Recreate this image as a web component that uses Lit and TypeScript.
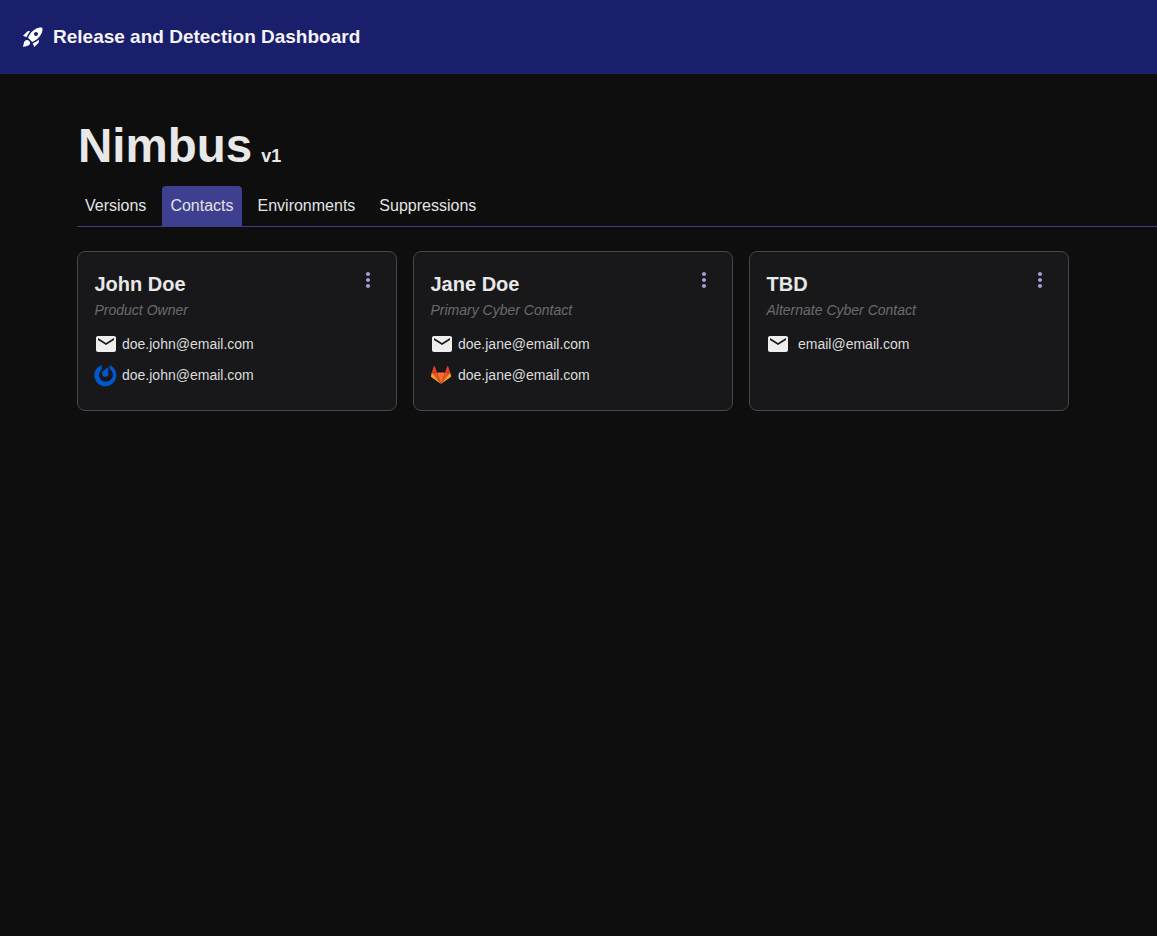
import { LitElement, html, css, svg } from 'lit';
import { customElement } from 'lit/decorators.js';

const mailIcon = html`<svg class="icon" viewBox="0 0 24 24"><path fill="#eeeeee" d="M20 4H4c-1.1 0-1.99.9-1.99 2L2 18c0 1.1.9 2 2 2h16c1.1 0 2-.9 2-2V6c0-1.1-.9-2-2-2zm0 4l-8 5-8-5V6l8 5 8-5v2z"/></svg>`;

const mattermostIcon = html`<svg class="icon" viewBox="0 0 24 24">
  <path fill="#0058cc" d="M7.6 1.9A11 11 0 1 0 15.6 2.100L15.700 5.900A7 7 0 1 1 7.700 6.200Z"/>
  <path fill="#0058cc" d="M14.200 4 14.400 12A3.400 3.400 0 1 1 9 8Z"/>
</svg>`;

const gitlabIcon = html`<svg class="icon" viewBox="0 0 24 24">
  ${svg`<path fill="#fc6d26" d="M11 21 7 9.500h8z"/>
  <path fill="#f0512b" d="M11 21 7 9.500H1.800z"/>
  <path fill="#fca326" d="M1.800 9.500 1 12.900c-.1.400 0 .800.300 1L11 21z"/>
  <path fill="#ea3f25" d="M1.800 9.500H7L4.700 3.200c-.1-.400-.600-.400-.800 0z"/>
  <path fill="#f0512b" d="M11 21l4-11.500h5.200z"/>
  <path fill="#fca326" d="M20.200 9.500l.800 3.400c.1.400 0 .800-.300 1L11 21z"/>
  <path fill="#ea3f25" d="M20.200 9.500H15l2.300-6.300c.1-.400.600-.400.800 0z"/>`}
</svg>`;

const contacts = [
  {
    name: 'John Doe',
    role: 'Product Owner',
    rows: [
      { icon: mailIcon, text: 'doe.john@email.com' },
      { icon: mattermostIcon, text: 'doe.john@email.com' },
    ],
  },
  {
    name: 'Jane Doe',
    role: 'Primary Cyber Contact',
    rows: [
      { icon: mailIcon, text: 'doe.jane@email.com' },
      { icon: gitlabIcon, text: 'doe.jane@email.com' },
    ],
  },
  {
    name: 'TBD',
    role: 'Alternate Cyber Contact',
    rows: [{ icon: mailIcon, text: 'email@email.com', wide: true }],
  },
];

const tabs = ['Versions', 'Contacts', 'Environments', 'Suppressions'];

@customElement('app-root')
export class AppRoot extends LitElement {
  static styles = css`
    :host {
      display: block;
      min-height: 936px;
      background-color: #0e0e0e;
      color: #e8e8e8;
      font-family: 'Liberation Sans', Arial, sans-serif;
    }

    .app-bar {
      display: flex;
      align-items: center;
      gap: 8px;
      height: 74px;
      padding-left: 21px;
      background-color: #1a1f6b;
      color: #f4f4f8;
      font-size: 19px;
      font-weight: 700;
    }

    .rocket {
      width: 24px;
      height: 24px;
      fill: #ffffff;
    }

    .content {
      padding-top: 44px;
      padding-left: 77px;
    }

    .title {
      display: flex;
      align-items: baseline;
      gap: 9px;
      margin: 0 0 13px 1px;
      height: 55px;
      line-height: 55px;
      font-size: 47.5px;
      font-weight: 700;
    }

    .title small {
      font-size: 18px;
    }

    .tabs {
      display: flex;
      gap: 8px;
      height: 40px;
      border-bottom: 1px solid #3f3f8f;
    }

    .tab {
      padding: 0 8px;
      line-height: 39px;
      border-radius: 4px 4px 0 0;
      font-size: 16px;
      color: #e4e4e4;
    }

    .tab.active {
      background-color: #3f3f8f;
    }

    .cards {
      display: flex;
      gap: 16px;
      margin-top: 24px;
    }

    .card {
      position: relative;
      box-sizing: border-box;
      width: 320px;
      height: 160px;
      padding: 20px 17px;
      background-color: #18181b;
      border: 1px solid #46464b;
      border-radius: 8px;
    }

    .menu {
      position: absolute;
      top: 16px;
      right: 16px;
      width: 24px;
      height: 24px;
      fill: #a59fdc;
    }

    .name {
      margin: 0 0 0 -0.5px;
      height: 24px;
      line-height: 24px;
      font-size: 20px;
      font-weight: 700;
    }

    .role {
      margin: 4px 0 0 -0.5px;
      height: 20px;
      line-height: 20px;
      font-size: 14px;
      font-style: italic;
      color: #6a6a6f;
    }

    .rows {
      display: flex;
      flex-direction: column;
      gap: 7px;
      margin-top: 12px;
    }

    .row {
      display: flex;
      align-items: center;
      gap: 4px;
      height: 24px;
      margin-left: -1px;
      font-size: 14px;
      color: #dcdcdc;
    }

    .row.wide {
      gap: 8px;
    }

    .icon {
      width: 24px;
      height: 24px;
      flex: none;
    }
  `;

  render() {
    return html`
      <header class="app-bar">
        <svg class="rocket" viewBox="0 0 24 24">
          <path d="M9.19 6.35c-2.04 2.29-3.44 5.58-3.57 5.89L2 10.69l4.05-4.05c.47-.47 1.15-.68 1.81-.55l1.33.26zM11.17 17s3.74-1.55 5.89-3.7c5.4-5.4 4.5-9.62 4.21-10.57-.95-.3-5.17-1.19-10.57 4.21C8.55 9.09 7 12.83 7 12.83L11.17 17zm6.48-2.19c-2.29 2.04-5.58 3.44-5.89 3.57L13.31 22l4.05-4.05c.47-.47.68-1.15.55-1.81l-.26-1.33zM9 18c0 .83-.34 1.58-.88 2.12C6.94 21.3 2 22 2 22s.7-4.94 1.88-6.12C4.42 15.34 5.17 15 6 15c1.66 0 3 1.34 3 3zm4-9c0-1.1.9-2 2-2s2 .9 2 2-.9 2-2 2-2-.9-2-2z"/>
        </svg>
        <span>Release and Detection Dashboard</span>
      </header>
      <main class="content">
        <h1 class="title">Nimbus <small>v1</small></h1>
        <nav class="tabs">
          ${tabs.map(
            (t) => html`<div class="tab ${t === 'Contacts' ? 'active' : ''}">${t}</div>`,
          )}
        </nav>
        <section class="cards">
          ${contacts.map(
            (c) => html`
              <article class="card">
                <svg class="menu" viewBox="0 0 24 24">
                  <path d="M12 8c1.1 0 2-.9 2-2s-.9-2-2-2-2 .9-2 2 .9 2 2 2zm0 2c-1.1 0-2 .9-2 2s.9 2 2 2 2-.9 2-2-.9-2-2-2zm0 6c-1.1 0-2 .9-2 2s.9 2 2 2 2-.9 2-2-.9-2-2-2z"/>
                </svg>
                <h2 class="name">${c.name}</h2>
                <div class="role">${c.role}</div>
                <div class="rows">
                  ${c.rows.map(
                    (r: any) => html`<div class="row ${r.wide ? 'wide' : ''}">${r.icon}<span>${r.text}</span></div>`,
                  )}
                </div>
              </article>
            `,
          )}
        </section>
      </main>
    `;
  }
}
